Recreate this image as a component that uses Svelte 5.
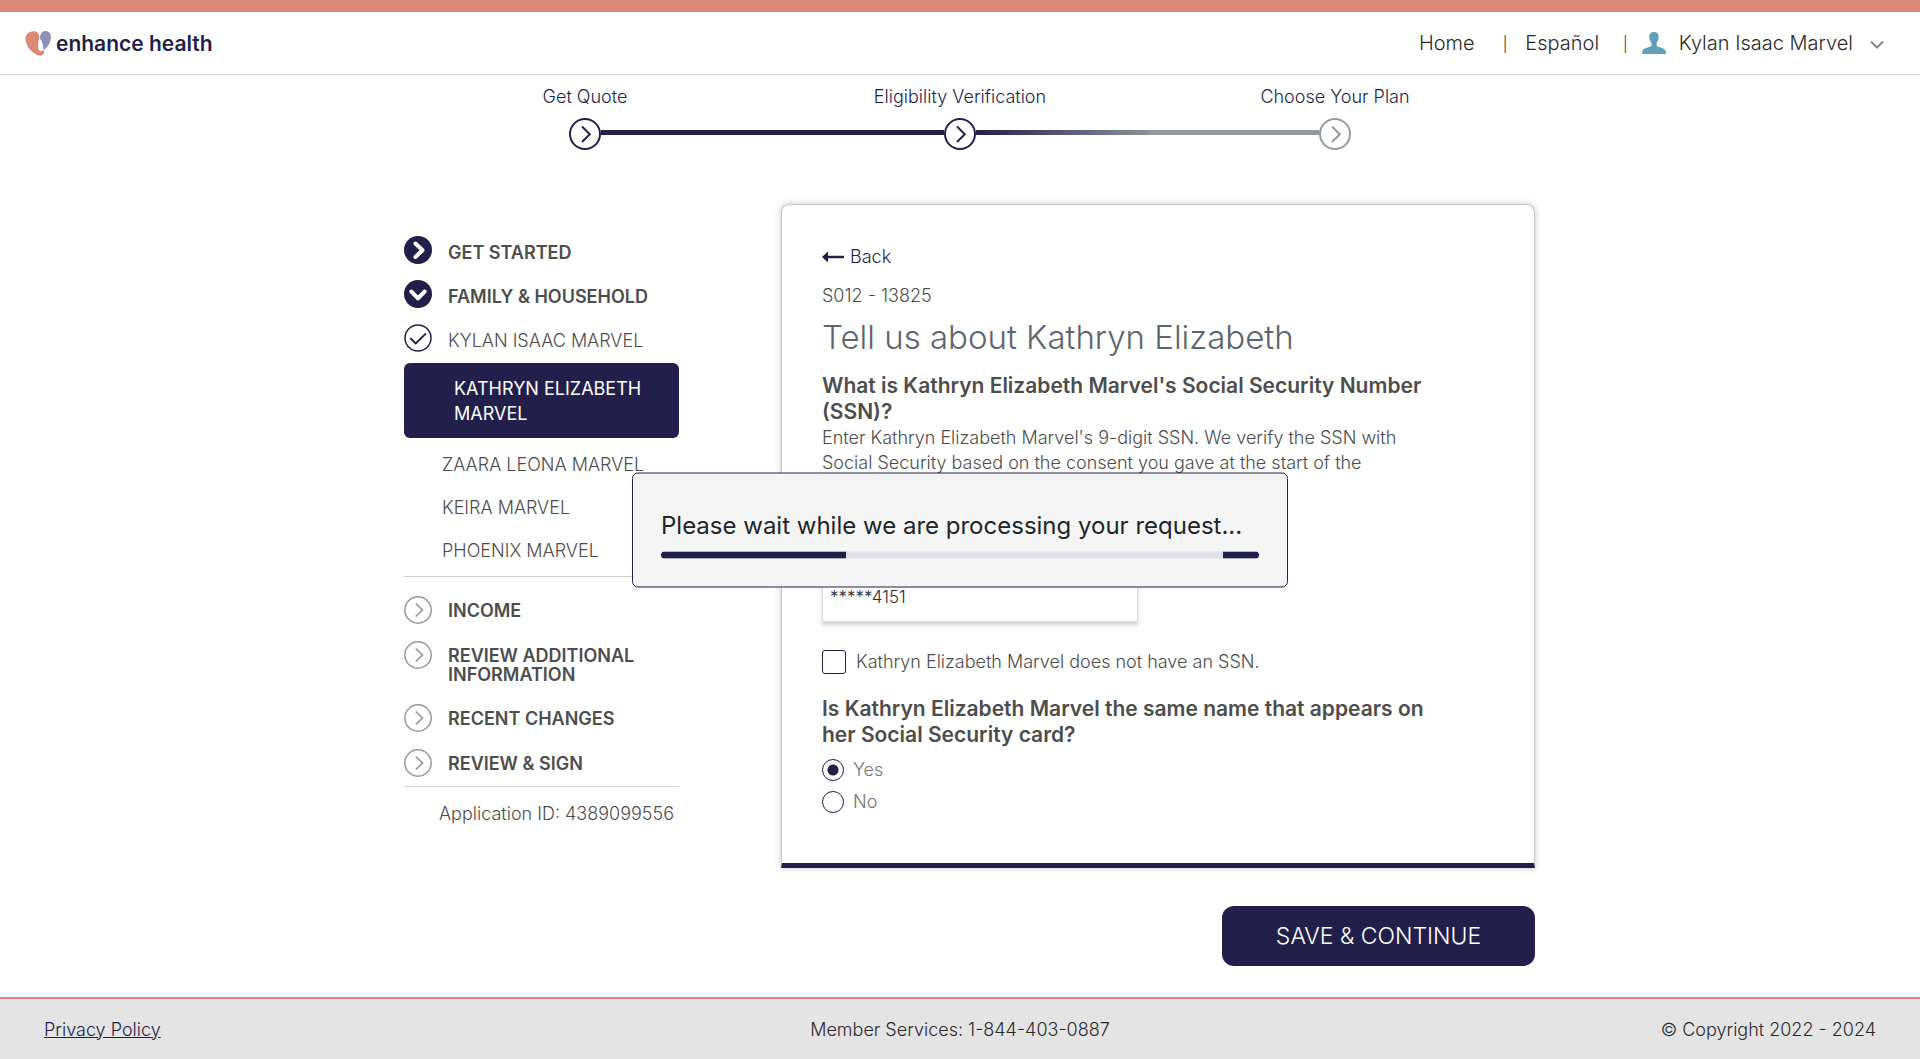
<script>
  const steps = [
    { label: 'Get Quote', before: 'none', after: 'done', state: 'done' },
    { label: 'Eligibility Verification', before: 'done', after: 'fading', state: 'done' },
    { label: 'Choose Your Plan', before: 'todo', after: 'none', state: 'todo' }
  ];

  const members = ['ZAARA LEONA MARVEL', 'KEIRA MARVEL', 'PHOENIX MARVEL'];
  const sections = ['INCOME', 'REVIEW ADDITIONAL INFORMATION', 'RECENT CHANGES', 'REVIEW & SIGN'];

  let ssn = $state('*****4151');
  let noSsn = $state(false);
  let sameName = $state('yes');
</script>

<div class="page">
  <header class="topbar">
    <a class="logo" href="#home">
      <svg width="26" height="25" viewBox="0 0 26 25" aria-hidden="true">
        <path fill="#db8877" d="M7 .5C11.500-.4 14.300 2 14.500 6.500 13.600 9.500 13 12 13 15.500 13 18.500 14 20 16 20 17.500 20 18.400 19.700 19 19.600 19.300 22 18.600 24.600 15.500 24.700 11.500 24.500 5.600 20.500 2.700 15.500-.4 10-1 2 7 .5Z" />
        <path fill="#8d92b8" d="M20.500 0C24.500.1 26.400 3 25.900 7.500 25.300 12.500 22.500 16.300 18.600 19.500 18.300 15 17.600 10.500 14.900 7.500 15.200 3 17-.1 20.500 0Z" />
      </svg>
      <span>enhance health</span>
    </a>
    <nav class="links">
      <a class="home" href="#home">Home</a>
      <span class="bar">|</span>
      <a class="lang" href="#espanol">Español</a>
      <span class="bar">|</span>
      <button class="user" type="button">
        <svg width="24" height="22" viewBox="0 0 24 22" aria-hidden="true">
          <path fill="#609fb9" d="M12 0C15.200 0 16.700 2 16.700 4.500 16.700 7.500 16 9.300 14.600 10.800V13.800C16 15.400 19.500 15.500 21.700 16.700 23.500 17.700 24 19.300 24 22H0C0 19.300.5 17.700 2.300 16.700 4.500 15.500 8 15.400 9.400 13.800V10.800C8 9.300 7.300 7.500 7.300 4.500 7.300 2 8.800 0 12 0Z" />
        </svg>
        <span>Kylan Isaac Marvel</span>
        <svg width="14" height="9" viewBox="0 0 14 9" aria-hidden="true">
          <path d="M1 1.500 7 7.500 13 1.500" fill="none" stroke="#858585" stroke-width="2" />
        </svg>
      </button>
    </nav>
  </header>

  <ol class="stepper">
    {#each steps as step}
      <li>
        <span class="step-label">{step.label}</span>
        <span class="track">
          <span class="line {step.before}"></span>
          <svg class={step.state} width="32" height="32" viewBox="0 0 32 32" aria-hidden="true">
            <circle cx="16" cy="16" r="15" />
            <path d="M13 8.500 20.800 16.300 13 24" />
          </svg>
          <span class="line {step.after}"></span>
        </span>
      </li>
    {/each}
  </ol>

  <main>
    <aside>
      <ul class="group started">
        <li>
          <svg width="28" height="28" viewBox="0 0 28 28" aria-hidden="true">
            <circle cx="14" cy="14" r="14" fill="#221f4b" />
            <path d="M11.500 7.500 18.500 14.200 11.500 21" fill="none" stroke="#fff" stroke-width="4" stroke-linecap="round" stroke-linejoin="round" />
          </svg>
          <a href="#get-started">GET STARTED</a>
        </li>
        <li>
          <svg width="28" height="28" viewBox="0 0 28 28" aria-hidden="true">
            <circle cx="14" cy="14" r="14" fill="#221f4b" />
            <path d="M7.300 11.500 14 18.300 20.700 11.500" fill="none" stroke="#fff" stroke-width="4" stroke-linecap="round" stroke-linejoin="round" />
          </svg>
          <a href="#family">FAMILY &amp; HOUSEHOLD</a>
        </li>
        <li>
          <svg width="28" height="28" viewBox="0 0 28 28" aria-hidden="true">
            <circle cx="14" cy="14" r="13" fill="none" stroke="#221f4b" stroke-width="1.500" />
            <path d="M6.800 14.500 11.700 19.500 21.500 9.800" fill="none" stroke="#221f4b" stroke-width="1.800" stroke-linecap="round" stroke-linejoin="round" />
          </svg>
          <a class="light" href="#kylan">KYLAN ISAAC MARVEL</a>
        </li>
      </ul>
      <a class="current" href="#kathryn" aria-current="page">KATHRYN ELIZABETH MARVEL</a>
      <ul class="members">
        {#each members as member}
          <li><a href="#member">{member}</a></li>
        {/each}
      </ul>
      <ul class="group upcoming">
        {#each sections as section}
          <li>
            <svg width="28" height="28" viewBox="0 0 28 28" aria-hidden="true">
              <circle cx="14" cy="14" r="13.200" fill="none" stroke="#999" stroke-width="1.500" />
              <path d="M11.800 7.500 18.500 14 11.800 20.500" fill="none" stroke="#999" stroke-width="1.700" />
            </svg>
            <a href="#section">{section}</a>
          </li>
        {/each}
      </ul>
      <p class="app-id">Application ID: 4389099556</p>
    </aside>

    <form onsubmit={(event) => event.preventDefault()}>
      <div class="card">
        <a class="back" href="#back">
          <svg width="22" height="12" viewBox="0 0 22 12" aria-hidden="true">
            <path fill="#221f4b" d="M0 6 6 .5V4.700H22V7.300H6V11.500Z" />
          </svg>
          Back
        </a>
        <p class="code">S012 - 13825</p>
        <h1>Tell us about Kathryn Elizabeth</h1>
        <h2 id="ssn-question">What is Kathryn Elizabeth Marvel's Social Security Number (SSN)?</h2>
        <p class="hint">Enter Kathryn Elizabeth Marvel's 9-digit SSN. We verify the SSN with Social Security based on the consent you gave at the start of the</p>
        <input class="ssn" type="text" aria-labelledby="ssn-question" bind:value={ssn} />
        <label class="check">
          <input type="checkbox" bind:checked={noSsn} />
          <span>Kathryn Elizabeth Marvel does not have an SSN.</span>
        </label>
        <fieldset>
          <legend>Is Kathryn Elizabeth Marvel the same name that appears on her Social Security card?</legend>
          <label class="radio"><input type="radio" name="same-name" value="yes" bind:group={sameName} />Yes</label>
          <label class="radio"><input type="radio" name="same-name" value="no" bind:group={sameName} />No</label>
        </fieldset>
      </div>
      <button class="save" type="submit">SAVE &amp; CONTINUE</button>
    </form>
  </main>

  <footer>
    <a href="#privacy">Privacy Policy</a>
    <span>Member Services: 1-844-403-0887</span>
    <span>© Copyright 2022 - 2024</span>
  </footer>

  <div class="wait" role="status">
    <p>Please wait while we are processing your request...</p>
    <div class="progress"><span class="head"></span><span class="tail"></span></div>
  </div>
</div>

<style>
  :global(body) {
    margin: 0;
  }
  .page,
  .page :global(*) {
    box-sizing: border-box;
  }
  .page {
    min-height: 100vh;
    display: flex;
    flex-direction: column;
    background: #fff;
    color: #4d4d4d;
    font-family: Inter, "Liberation Sans", sans-serif;
    font-size: 18px;
    font-weight: 300;
    line-height: 25px;
  }
  ul,
  ol {
    list-style: none;
    margin: 0;
    padding: 0;
  }
  p,
  h1,
  h2 {
    margin: 0;
  }
  a {
    color: inherit;
    text-decoration: none;
  }
  button,
  input {
    font: inherit;
    color: inherit;
  }

  .topbar {
    display: flex;
    align-items: center;
    justify-content: space-between;
    height: 75px;
    padding: 0 36px 0 25px;
    border-top: 12px solid #db8878;
    border-bottom: 1px solid #d5d5d5;
  }
  .logo {
    display: flex;
    align-items: center;
    gap: 5px;
    color: #221f4b;
    font-size: 21px;
    font-weight: 600;
  }
  .logo svg {
    flex: none;
  }
  .links {
    display: flex;
    align-items: center;
    color: #2b2b2b;
    font-size: 20px;
  }
  .bar {
    font-size: 15px;
  }
  .home {
    margin-right: 28px;
  }
  .lang {
    margin: 0 24px 0 18px;
  }
  .user {
    display: flex;
    align-items: center;
    gap: 13px;
    margin-left: 14px;
    padding: 0;
    border: 0;
    background: none;
    cursor: pointer;
  }
  .user svg:last-child {
    margin: 2px 0 0 4px;
  }

  .stepper {
    display: grid;
    grid-template-columns: repeat(3, 1fr);
    width: 100%;
    max-width: 1125px;
    margin: 0 auto;
    padding-top: 9px;
    color: #221f4b;
    text-align: center;
  }
  .step-label {
    display: block;
    margin-bottom: 9px;
  }
  .track {
    display: flex;
    align-items: center;
  }
  .track svg {
    flex: none;
    fill: none;
    stroke: #221f4b;
    stroke-width: 2;
  }
  .track svg.todo {
    stroke: #9299a5;
  }
  .line {
    flex: 1;
    height: 5px;
    margin-bottom: 3px;
  }
  .line.done {
    background: #221f4b;
  }
  .line.fading {
    background: linear-gradient(90deg, #221f4b, #8a9199);
  }
  .line.todo {
    background: #9299a5;
  }

  main {
    display: flex;
    align-items: flex-start;
    gap: 102px;
    width: 100%;
    max-width: 1150px;
    margin: 0 auto;
    padding: 54px 0 31px 19px;
  }
  aside {
    flex: none;
    width: 275px;
    padding-top: 32px;
  }
  .group {
    display: flex;
    flex-direction: column;
    gap: 17px;
    font-weight: 600;
    line-height: 19px;
  }
  .group li {
    display: flex;
    align-items: flex-start;
    gap: 16px;
  }
  .group svg {
    flex: none;
  }
  .started {
    gap: 16px;
  }
  .started a {
    padding-top: 7px;
  }
  .upcoming a {
    padding: 5px 0 3px;
  }
  .group .light {
    font-weight: 300;
  }
  .current {
    display: block;
    margin-top: 11px;
    padding: 13px 20px 12px 50px;
    border-radius: 6px;
    background: #221f4b;
    color: #fff;
    font-weight: 400;
  }
  .members {
    display: flex;
    flex-direction: column;
    gap: 18px;
    padding: 14px 0 13px 38px;
    border-bottom: 1px solid #d0d0d0;
  }
  .upcoming {
    padding: 19px 0 9px;
    border-bottom: 1px solid #d0d0d0;
  }
  .app-id {
    margin: 14px 0 0 35px;
    white-space: nowrap;
  }

  form {
    flex: 1;
    display: flex;
    flex-direction: column;
  }
  .card {
    padding: 39px 40px 49px;
    border: 1px solid #c6c6c6;
    border-bottom: 5px solid #221f4b;
    border-radius: 8px 8px 0 0;
    box-shadow: 0 0 7px rgba(0, 0, 0, 0.22);
  }
  .back {
    display: flex;
    align-items: center;
    gap: 6px;
    color: #221f4b;
  }
  .code {
    margin-top: 14px;
  }
  h1 {
    margin-top: 10px;
    color: #5e6470;
    font-size: 33px;
    font-weight: 300;
    line-height: 38px;
  }
  h2,
  legend {
    max-width: 630px;
    color: #4d4d4d;
    font-size: 21px;
    font-weight: 600;
    line-height: 26px;
  }
  h2 {
    margin-top: 17px;
  }
  .hint {
    max-width: 620px;
    margin-bottom: 97px;
  }
  .ssn {
    display: block;
    width: 316px;
    height: 50px;
    padding: 0 7px;
    border: 1px solid #dcdcdc;
    background: #fff;
    box-shadow: 0 3px 4px rgba(0, 0, 0, 0.18);
    color: #2b2b2b;
    font-size: 17px;
  }
  .check {
    display: flex;
    align-items: center;
    gap: 10px;
    margin-top: 27px;
  }
  .check input {
    appearance: none;
    width: 24px;
    height: 24px;
    margin: 0;
    border: 1px solid #221f4b;
    border-radius: 3px;
    background: #fff;
  }
  .check input:checked {
    background: #221f4b;
  }
  fieldset {
    margin: 22px 0 0;
    padding: 0;
    border: 0;
  }
  legend {
    margin-bottom: 9px;
    padding: 0;
  }
  .radio {
    display: flex;
    align-items: center;
    gap: 9px;
    color: #757575;
  }
  .radio + .radio {
    margin-top: 7px;
  }
  .radio input {
    appearance: none;
    width: 22px;
    height: 22px;
    margin: 0;
    border: 1px solid #221f4b;
    border-radius: 50%;
    background: #fff;
  }
  .radio input:checked {
    background: radial-gradient(circle, #221f4b 5px, #fff 6px);
  }
  .save {
    align-self: flex-end;
    width: 313px;
    height: 60px;
    margin-top: 38px;
    border: 0;
    border-radius: 12px;
    background: #221f4b;
    color: #fff;
    font-size: 23px;
    cursor: pointer;
  }

  footer {
    display: grid;
    grid-template-columns: 1fr auto 1fr;
    align-items: center;
    height: 62px;
    margin-top: auto;
    padding: 0 44px;
    border-top: 2px solid #db8878;
    background: #e4e4e4;
    color: #2b2b2b;
  }
  footer a {
    color: #221f4b;
    text-decoration: underline;
  }
  footer span:last-child {
    text-align: right;
  }

  .wait {
    position: fixed;
    top: 50%;
    left: 50%;
    transform: translate(-50%, -50%);
    width: 656px;
    padding: 37px 28px 28px;
    border: 1px solid #221f4b;
    border-radius: 6px;
    background: #f5f5f5;
    color: #212529;
    font-size: 24px;
    font-weight: 400;
    line-height: 30px;
    white-space: nowrap;
  }
  .progress {
    display: flex;
    justify-content: space-between;
    height: 7px;
    margin-top: 11px;
    overflow: hidden;
    border-radius: 4px;
    background: #dee2e6;
  }
  .head {
    width: 31%;
    background: #221f4b;
  }
  .tail {
    width: 6%;
    background: #221f4b;
  }
</style>
